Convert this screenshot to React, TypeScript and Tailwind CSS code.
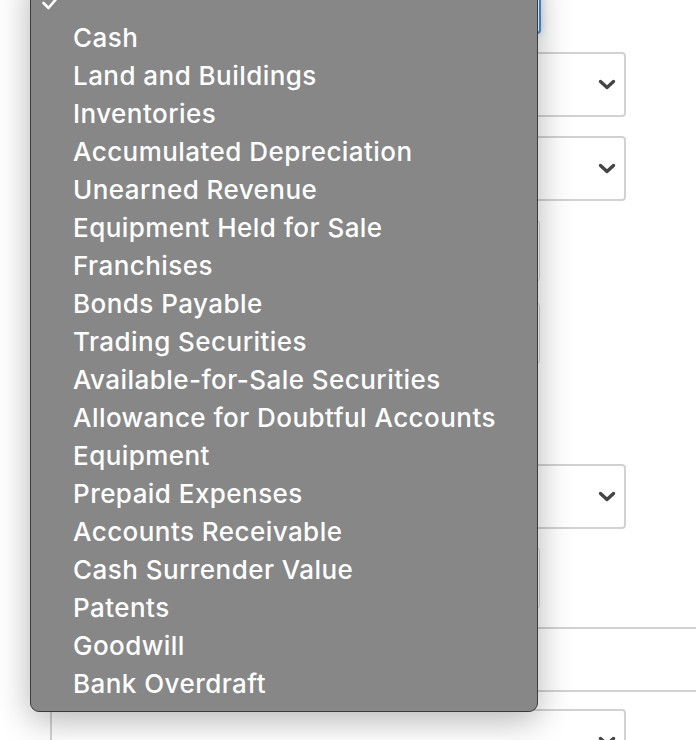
import React from "react";

const options = [
  "",
  "Cash",
  "Land and Buildings",
  "Inventories",
  "Accumulated Depreciation",
  "Unearned Revenue",
  "Equipment Held for Sale",
  "Franchises",
  "Bonds Payable",
  "Trading Securities",
  "Available-for-Sale Securities",
  "Allowance for Doubtful Accounts",
  "Equipment",
  "Prepaid Expenses",
  "Accounts Receivable",
  "Cash Surrender Value",
  "Patents",
  "Goodwill",
  "Bank Overdraft",
];

const Chevron = () => (
  <svg width="18" height="11" viewBox="0 0 18 11" className="shrink-0">
    <path d="M2.5 2.5l6.5 6 6.5-6" fill="none" stroke="#454545" strokeWidth="3.4" strokeLinecap="round" strokeLinejoin="round" />
  </svg>
);

const SelectBox = ({ className }: { className: string }) => (
  <div
    className={
      "h-[65px] shrink-0 rounded-[4px] border-2 border-[#d2d2d2] bg-white flex items-center justify-end pr-[8px] " +
      className
    }
  >
    <Chevron />
  </div>
);

const InputBox = ({ className }: { className: string }) => (
  <div className={"h-[62px] w-[490px] shrink-0 rounded-[4px] border border-[#d6d6d6] bg-white " + className} />
);

export default function App() {
  return (
    <div className="relative w-[696px] h-[740px] overflow-hidden bg-white" style={{ fontFamily: "Inter, 'Noto Sans', sans-serif" }}>
      {/* form behind the open menu */}
      <div className="flex flex-col pl-[50px]">
        <div className="mt-[-30px] h-[64px] w-[491px] rounded-[4px] border-2 border-[#4a90d9] bg-white shadow-[0_0_8px_rgba(74,144,217,0.35)]" />
        <SelectBox className="mt-[18px] w-[576px]" />
        <SelectBox className="mt-[19px] w-[576px]" />
        <InputBox className="mt-[19px]" />
        <InputBox className="mt-[20px]" />
        <SelectBox className="mt-[100px] w-[576px]" />
        <InputBox className="mt-[18px]" />
        <SelectBox className="mt-[18px] w-[700px] rounded-r-none border-r-0 !pr-0 mr-[-60px]" />
        <SelectBox className="mt-[17px] w-[576px]" />
      </div>

      {/* open dropdown */}
      <div className="absolute left-[30px] top-[-28px] w-[508px] rounded-[9px] border border-[#3c3c3c] bg-[#878787] pt-[8px] pb-[8px] shadow-[0_8px_34px_rgba(0,0,0,0.3)]">
        {options.map((o, i) => (
          <div key={i} className="relative h-[38px] flex items-center pl-[42px] text-[26px] font-medium leading-none text-white tracking-[0.45px]">
            {i === 0 && (
              <svg width="18" height="14" viewBox="0 0 18 14" className="absolute left-[10px] top-[15px]">
                <path d="M2.5 7l5 5L16 2" fill="none" stroke="#fff" strokeWidth="2.6" strokeLinecap="round" strokeLinejoin="round" />
              </svg>
            )}
            {o}
          </div>
        ))}
      </div>
    </div>
  );
}
